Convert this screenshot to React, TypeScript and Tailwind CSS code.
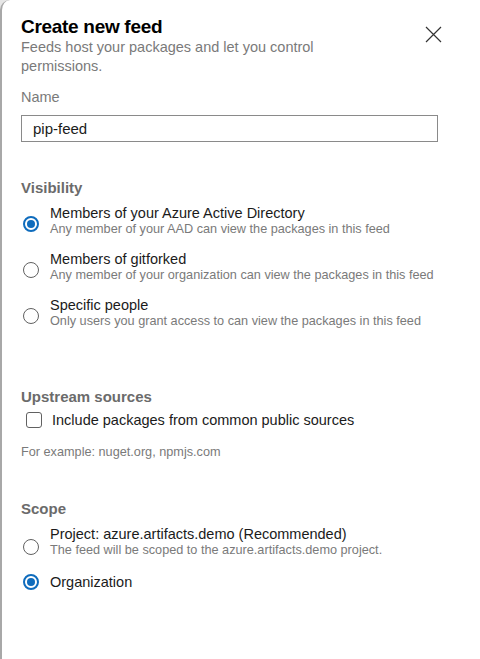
import { useState } from 'react'

// ─────────────────────────────────────────────────────────
// Small controls
// ─────────────────────────────────────────────────────────

function Radio({ checked }: { checked: boolean }) {
  return checked ? (
    <div className="flex h-4 w-4 shrink-0 items-center justify-center rounded-full border-2 border-[#0f6cbd] bg-white">
      <div className="h-2 w-2 rounded-full bg-[#0f6cbd]" />
    </div>
  ) : (
    <div className="h-4 w-4 shrink-0 rounded-full border border-[#616161] bg-white" />
  )
}

type Option = { id: string; label: string; desc?: string }

const VISIBILITY: Option[] = [
  {
    id: 'aad',
    label: 'Members of your Azure Active Directory',
    desc: 'Any member of your AAD can view the packages in this feed',
  },
  {
    id: 'org',
    label: 'Members of gitforked',
    desc: 'Any member of your organization can view the packages in this feed',
  },
  {
    id: 'people',
    label: 'Specific people',
    desc: 'Only users you grant access to can view the packages in this feed',
  },
]

function OptionRow({
  option,
  checked,
  onSelect,
  radioOffset = 'mt-3',
}: {
  option: Option
  checked: boolean
  onSelect: () => void
  radioOffset?: string
}) {
  return (
    <div onClick={onSelect} className="flex cursor-pointer items-start">
      <div className={`ml-[2px] mr-[11px] flex ${option.desc ? radioOffset : 'mt-px'}`}>
        <Radio checked={checked} />
      </div>
      <div>
        <div className="text-[14.5px] leading-[18px] text-[#1b1b1b]">{option.label}</div>
        {option.desc && (
          <div className="text-[12.7px] leading-[15px] text-[#7a7a7a]">{option.desc}</div>
        )}
      </div>
    </div>
  )
}

// ─────────────────────────────────────────────────────────
// Page
// ─────────────────────────────────────────────────────────

export default function App() {
  const [name, setName] = useState('pip-feed')
  const [visibility, setVisibility] = useState('aad')
  const [upstream, setUpstream] = useState(false)
  const [scope, setScope] = useState('organization')

  return (
    <div className="min-h-screen bg-[#e6e6e6] font-['Liberation_Sans',Arial,sans-serif]">
      <div className="min-h-screen rounded-tl-[10px] border-l-2 border-[#a8a8a8] bg-white pl-[19px] pr-[40px]">
        {/* ── Header ─────────────────────────────────── */}
        <div className="flex items-start justify-between pt-[16px]">
          <div>
            <h1 className="text-[19px] font-bold leading-[22px] tracking-[-0.3px] text-black">
              Create new feed
            </h1>
            <p className="mt-0 w-[310px] text-[14.5px] leading-[19px] text-[#7a7a7a]">
              Feeds host your packages and let you control permissions.
            </p>
          </div>
          <button className="mr-[-2px] mt-[10px] text-[#333]">
            <svg width="17" height="17" viewBox="0 0 17 17" fill="none" stroke="currentColor" strokeWidth="1.2">
              <path d="M1 1 L16 16 M16 1 L1 16" />
            </svg>
          </button>
        </div>

        {/* ── Name ───────────────────────────────────── */}
        <label className="mt-[12px] block text-[14.5px] leading-[19px] text-[#7a7a7a]">Name</label>
        <input
          value={name}
          onChange={e => setName(e.target.value)}
          className="mt-[8px] block h-[27px] w-[417px] border border-[#8a8a8a] px-[11px] text-[15px] text-[#1b1b1b] outline-none"
        />

        {/* ── Visibility ─────────────────────────────── */}
        <h2 className="mt-[36px] text-[15px] font-semibold leading-[20px] text-[#6b6b6b]">Visibility</h2>
        <div className="mt-[6px] flex flex-col gap-[13px]">
          {VISIBILITY.map(o => (
            <OptionRow
              key={o.id}
              option={o}
              checked={visibility === o.id}
              onSelect={() => setVisibility(o.id)}
            />
          ))}
        </div>

        {/* ── Upstream sources ───────────────────────── */}
        <h2 className="mt-[58px] text-[15px] font-semibold leading-[20px] text-[#6b6b6b]">
          Upstream sources
        </h2>
        <div
          onClick={() => setUpstream(v => !v)}
          className="mt-[4px] flex cursor-pointer items-center"
        >
          <div
            className={`ml-[5px] mr-[10px] flex h-[16px] w-[16px] items-center justify-center rounded-[3px] border ${
              upstream ? 'border-[#0f6cbd] bg-[#0f6cbd]' : 'border-[#616161] bg-white'
            }`}
          >
            {upstream && (
              <svg width="10" height="10" viewBox="0 0 10 10" fill="none" stroke="white" strokeWidth="1.5">
                <path d="M1.5 5.2 L4 7.5 L8.5 2.5" />
              </svg>
            )}
          </div>
          <span className="text-[14.5px] leading-[18px] text-[#1b1b1b]">
            Include packages from common public sources
          </span>
        </div>
        <p className="mt-[16px] text-[12.7px] leading-[15px] text-[#7a7a7a]">
          For example: nuget.org, npmjs.com
        </p>

        {/* ── Scope ──────────────────────────────────── */}
        <h2 className="mt-[39px] text-[15px] font-semibold leading-[20px] text-[#6b6b6b]">Scope</h2>
        <div className="mt-[6px] flex flex-col gap-[15px]">
          <OptionRow
            option={{
              id: 'project',
              label: 'Project: azure.artifacts.demo (Recommended)',
              desc: 'The feed will be scoped to the azure.artifacts.demo project.',
            }}
            checked={scope === 'project'}
            onSelect={() => setScope('project')}
            radioOffset="mt-[14px]"
          />
          <OptionRow
            option={{ id: 'organization', label: 'Organization' }}
            checked={scope === 'organization'}
            onSelect={() => setScope('organization')}
          />
        </div>
      </div>
    </div>
  )
}
